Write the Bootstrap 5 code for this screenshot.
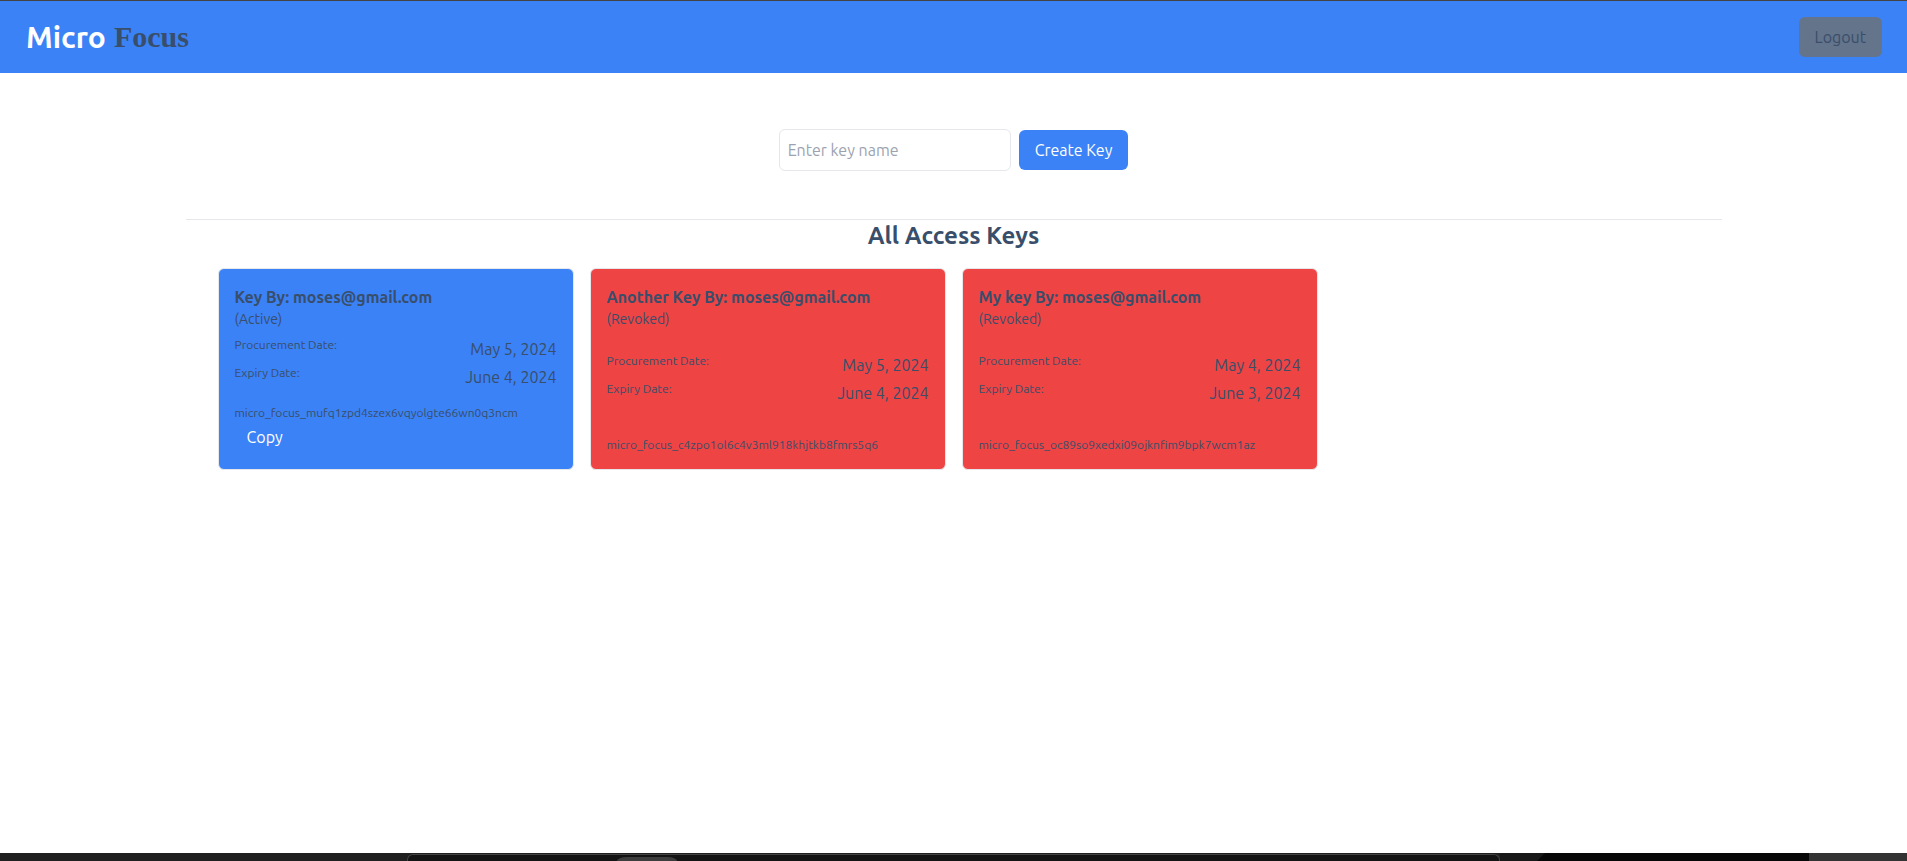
<!DOCTYPE html>
<html lang="en">
<head>
<meta charset="utf-8">
<meta name="viewport" content="width=device-width, initial-scale=1">
<title>Micro Focus</title>
<link href="https://cdn.jsdelivr.net/npm/bootstrap@5.3.0/dist/css/bootstrap.min.css" rel="stylesheet">
<style>
  :root { --ink: #394e6a; --blue: #3b82f6; --red: #ef4444; --line: #e5e7eb; }
  body { font-family: Ubuntu, Roboto, "Noto Sans", sans-serif; font-size: 16px; line-height: 24px; color: var(--ink); background: #fff; }
  .topbar { background: var(--blue); border-top: 1px solid #444; height: 73px; padding: 0 25px 0 26px; }
  .brand { font-size: 30px; line-height: 36px; color: #fff; }
  .brand-serif { font-family: "Liberation Serif", serif; color: var(--ink); }
  .btn-key { --bs-btn-color: #fff; --bs-btn-bg: var(--blue); --bs-btn-hover-color: #fff; --bs-btn-hover-bg: #2563eb; --bs-btn-border-width: 0; --bs-btn-padding-x: 16px; --bs-btn-padding-y: 8px; --bs-btn-border-radius: 6px; --bs-btn-line-height: 24px; }
  .btn-out { --bs-btn-color: var(--ink); --bs-btn-bg: #64748b; --bs-btn-hover-color: #fff; --bs-btn-hover-bg: #475569; }
  .btn-copy { --bs-btn-padding-x: 12px; --bs-btn-padding-y: 4px; }
  .page { max-width: 1536px; }
  .create { padding: 56px 0 48px; border-bottom: 1px solid var(--line); }
  .key-input { width: 232px; height: 42px; padding: 8px; border-color: var(--line); border-radius: 6px; }
  .key-input::placeholder { color: #9ca3af; }
  .keys-title { font-size: 24px; line-height: 32px; margin-bottom: 16px; }
  .keys-grid { --bs-gutter-x: 16px; --bs-gutter-y: 16px; }
  .key-card { padding: 16px; border: 1px solid var(--line); border-radius: 6px; background: var(--blue); color: var(--ink); }
  .key-card.revoked { background: var(--red); }
  .key-name { font-size: 16px; line-height: 24px; }
  .key-state { font-size: 14px; line-height: 20px; }
  .tiny { font-size: 12px; line-height: 16px; }
  .dates { margin: 8px 0 16px; gap: 4px; }
  .dock { height: 8px; background: #202020; }
  .dock-left { flex: 407 0 0; }
  .dock-tray { flex: 1093 0 0; background: #141414; border: 1px solid #444; border-bottom: 0; border-radius: 6px 6px 0 0; margin-top: 1px; padding-top: 2px; }
  .dock-tab { width: 60px; margin-left: 19.2%; background: #3d3d3d; border-radius: 12px 12px 0 0 / 5px 5px 0 0; }
  .dock-right { flex: 407 0 0; background: #181818; }
  .dock-dark { width: 67%; background: #070707; clip-path: polygon(8px 0, 100% 0, 100% 100%, 0 100%); }
  .dock-end { width: 24%; background: #333; }
</style>
</head>
<body>
<div class="d-flex flex-column min-vh-100">
  <header class="topbar d-flex align-items-center justify-content-between">
    <a class="brand d-flex align-items-center gap-2 fw-bold text-decoration-none" href="#"><span>Micro</span><span class="brand-serif">Focus</span></a>
    <button type="button" class="btn btn-key btn-out">Logout</button>
  </header>

  <main class="page w-100 mx-auto flex-grow-1">
    <form class="create d-flex justify-content-center align-items-center gap-2">
      <input id="keyName" type="text" class="form-control key-input" placeholder="Enter key name" aria-label="Enter key name">
      <button type="button" class="btn btn-key">Create Key</button>
    </form>

    <section>
      <h1 class="keys-title text-center fw-bold">All Access Keys</h1>
      <div class="px-4 mx-2">
        <div class="row row-cols-1 row-cols-md-2 row-cols-xl-4 keys-grid">
          <div class="col">
            <article class="key-card h-100 d-flex flex-column justify-content-between">
              <div>
                <h2 class="key-name fw-bold mb-0">Key By: moses@gmail.com</h2>
                <div class="key-state">(Active)</div>
              </div>
              <div class="dates d-flex flex-column">
                <div class="d-flex justify-content-between"><span class="tiny">Procurement Date:</span><span>May 5, 2024</span></div>
                <div class="d-flex justify-content-between"><span class="tiny">Expiry Date:</span><span>June 4, 2024</span></div>
              </div>
              <div>
                <div class="tiny">micro_focus_mufq1zpd4szex6vqyolgte66wn0q3ncm</div>
                <button type="button" class="btn btn-key btn-copy">Copy</button>
              </div>
            </article>
          </div>
          <div class="col">
            <article class="key-card revoked h-100 d-flex flex-column justify-content-between">
              <div>
                <h2 class="key-name fw-bold mb-0">Another Key By: moses@gmail.com</h2>
                <div class="key-state">(Revoked)</div>
              </div>
              <div class="dates d-flex flex-column">
                <div class="d-flex justify-content-between"><span class="tiny">Procurement Date:</span><span>May 5, 2024</span></div>
                <div class="d-flex justify-content-between"><span class="tiny">Expiry Date:</span><span>June 4, 2024</span></div>
              </div>
              <div class="tiny">micro_focus_c4zpo1ol6c4v3ml918khjtkb8fmrs5q6</div>
            </article>
          </div>
          <div class="col">
            <article class="key-card revoked h-100 d-flex flex-column justify-content-between">
              <div>
                <h2 class="key-name fw-bold mb-0">My key By: moses@gmail.com</h2>
                <div class="key-state">(Revoked)</div>
              </div>
              <div class="dates d-flex flex-column">
                <div class="d-flex justify-content-between"><span class="tiny">Procurement Date:</span><span>May 4, 2024</span></div>
                <div class="d-flex justify-content-between"><span class="tiny">Expiry Date:</span><span>June 3, 2024</span></div>
              </div>
              <div class="tiny">micro_focus_oc89so9xedxi09ojknfim9bpk7wcm1az</div>
            </article>
          </div>
        </div>
      </div>
    </section>
  </main>

  <footer class="dock d-flex" aria-hidden="true">
    <div class="dock-left"></div>
    <div class="dock-tray d-flex"><div class="dock-tab"></div></div>
    <div class="dock-right d-flex justify-content-end"><div class="dock-dark"></div><div class="dock-end"></div></div>
  </footer>
</div>
<script src="https://cdn.jsdelivr.net/npm/bootstrap@5.3.0/dist/js/bootstrap.bundle.min.js"></script>
</body>
</html>
